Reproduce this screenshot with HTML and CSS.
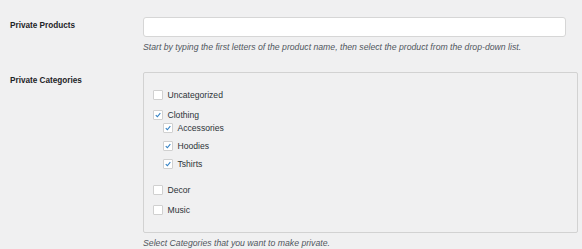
FILE: index.html
```html
<!DOCTYPE html>
<html lang="en">
<head>
    <meta charset="UTF-8">
    <meta name="viewport" content="width=device-width, initial-scale=1.0">
    <title>Private settings</title>
    <link rel="stylesheet" href="styles.css">
</head>
<body>
    <div class="form">
        <div class="row">
            <div class="label">Private Products</div>
            <div class="field">
                <input type="text" class="text-input">
                <p class="description">Start by typing the first letters of the product name, then select the product from the drop-down list.</p>
            </div>
        </div>
        <div class="row row-cats">
            <div class="label">Private Categories</div>
            <div class="field">
                <div class="cat-box">
                    <ul class="checklist">
                        <li><label><span class="box"></span>Uncategorized</label></li>
                        <li>
                            <label><span class="box checked"><svg viewBox="0 0 10 10"><path d="M2.2 5.2 L4.2 7.2 L7.9 2.6"/></svg></span>Clothing</label>
                            <ul class="children">
                                <li><label><span class="box checked"><svg viewBox="0 0 10 10"><path d="M2.2 5.2 L4.2 7.2 L7.9 2.6"/></svg></span>Accessories</label></li>
                                <li><label><span class="box checked"><svg viewBox="0 0 10 10"><path d="M2.2 5.2 L4.2 7.2 L7.9 2.6"/></svg></span>Hoodies</label></li>
                                <li><label><span class="box checked"><svg viewBox="0 0 10 10"><path d="M2.2 5.2 L4.2 7.2 L7.9 2.6"/></svg></span>Tshirts</label></li>
                            </ul>
                        </li>
                        <li><label><span class="box"></span>Decor</label></li>
                        <li><label><span class="box"></span>Music</label></li>
                    </ul>
                </div>
                <p class="description">Select Categories that you want to make private.</p>
            </div>
        </div>
    </div>
</body>
</html>
```

FILE: styles.css
```css
body {
    margin: 0;
    background: #f0f0f1;
    font-family: "Liberation Sans", Arial, sans-serif;
    color: #1d2327;
}
.form {
    padding: 17px 0 0 10px;
}
.row {
    display: flex;
}
.row-cats {
    margin-top: 20px;
}
.label {
    width: 133px;
    flex-shrink: 0;
    font-size: 8.2px;
    font-weight: bold;
    line-height: 10px;
    padding-top: 4px;
}
.field {
    flex: 1;
}
.text-input {
    display: block;
    box-sizing: border-box;
    width: 423px;
    height: 20px;
    margin: 0;
    background: #fff;
    border: 1px solid #d6d6d6;
    border-radius: 3px;
}
.description {
    margin: 5px 0 0;
    font-size: 8.7px;
    font-style: italic;
    line-height: 10px;
    color: #50575e;
}
.cat-box {
    box-sizing: border-box;
    width: 435px;
    height: 161px;
    border: 1px solid #d2d2d2;
    border-radius: 2px;
    padding: 17px 0 0 9px;
}
.checklist,
.children {
    list-style: none;
    margin: 0;
    padding: 0;
    display: flex;
    flex-direction: column;
}
.checklist {
    gap: 10px;
}
.children {
    gap: 8px;
    margin: 3px 0 6px 10px;
}
.checklist label {
    display: flex;
    align-items: center;
    height: 10px;
    font-size: 8.6px;
    color: #2c3338;
}
.box {
    box-sizing: border-box;
    width: 10px;
    height: 10px;
    margin-right: 4.5px;
    background: #fff;
    border: 1px solid #d0d0d0;
    border-radius: 1px;
    display: flex;
}
.box svg {
    width: 8px;
    height: 8px;
    fill: none;
    stroke: #3582c4;
    stroke-width: 1.4;
}
```
